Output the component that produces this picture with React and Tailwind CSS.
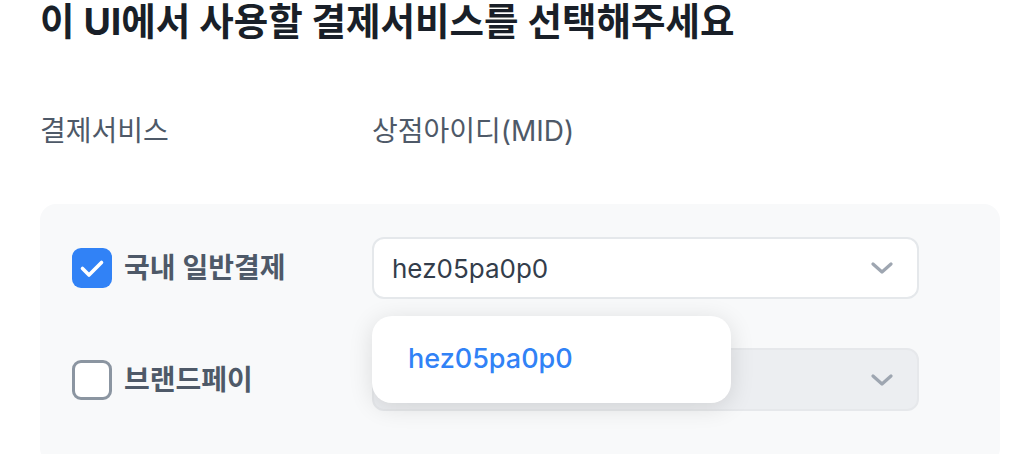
import React from "react";

const Chevron = () => (
  <svg width="22" height="12" viewBox="0 0 22 12" fill="none" className="shrink-0">
    <polyline
      points="2,2 11,10 20,2"
      stroke="#9ea6b1"
      strokeWidth="3.2"
      strokeLinecap="round"
      strokeLinejoin="round"
    />
  </svg>
);

const Checkbox = ({ checked }) =>
  checked ? (
    <div className="w-10 h-10 rounded-[9px] bg-[#3182f6] shrink-0">
      <svg width="40" height="40" viewBox="0 0 40 40" fill="none">
        <polyline
          points="10.5,20.5 17,27 29.5,14.5"
          stroke="white"
          strokeWidth="3.6"
          strokeLinecap="round"
          strokeLinejoin="round"
        />
      </svg>
    </div>
  ) : (
    <div className="w-10 h-10 rounded-[9px] border-[3px] border-[#8b95a1] bg-white shrink-0" />
  );

export default function App() {
  return (
    <div
      className="w-[1032px] h-[454px] overflow-hidden bg-white"
      style={{ fontFamily: 'Inter, "Noto Sans CJK KR", sans-serif' }}
    >
      <div className="px-10">
        <h1 className="text-[37.5px] leading-[44px] font-bold text-[#191f28]">
          이 UI에서 사용할 결제서비스를 선택해주세요
        </h1>

        <div className="mt-[69px] flex h-[36px] items-center text-[28px] text-[#4e5968]">
          <div className="w-[332px]">결제서비스</div>
          <div>상점아이디(MID)</div>
        </div>

        <div className="relative mt-[55px] w-[960px] h-[260px] rounded-2xl bg-[#f8f9fa] px-8 pt-[33px]">
          <div className="flex items-center h-[62px]">
            <div className="w-[300px] flex items-center gap-3">
              <Checkbox checked />
              <span className="text-[28px] font-semibold text-[#4e5968]">국내 일반결제</span>
            </div>
            <div className="w-[547px] h-[62px] rounded-xl border-2 border-[#e5e8eb] bg-white flex items-center justify-between pl-[18px] pr-6">
              <span className="text-[26px] text-[#333d4b]">hez05pa0p0</span>
              <Chevron />
            </div>
          </div>

          <div className="flex items-center h-[63px] mt-[49px]">
            <div className="w-[300px] flex items-center gap-3">
              <Checkbox />
              <span className="text-[28px] font-semibold text-[#4e5968]">브랜드페이</span>
            </div>
            <div className="w-[547px] h-[63px] rounded-xl border-2 border-[#e6e8eb] bg-[#eceef1] flex items-center justify-end pr-6">
              <Chevron />
            </div>
          </div>

          <div className="absolute left-[332px] top-[112px] w-[359px] h-[87px] rounded-[20px] bg-white shadow-[0_4px_24px_rgba(0,0,0,0.12)] flex items-center pl-9">
            <span className="text-[27px] font-medium text-[#3182f6]">hez05pa0p0</span>
          </div>
        </div>
      </div>
    </div>
  );
}
